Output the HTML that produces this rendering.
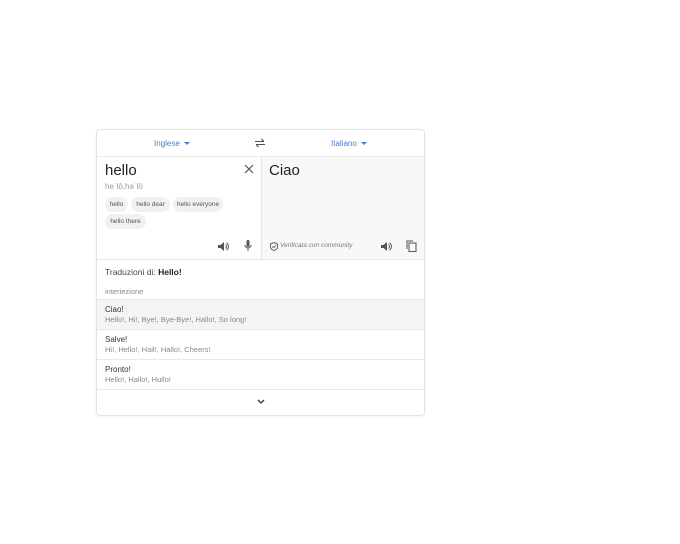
<!DOCTYPE html>
<html><head><meta charset="utf-8"><style>
body{margin:0;width:680px;height:544px;background:#fff;font-family:"Liberation Sans",Arial,sans-serif;position:relative;overflow:hidden}
.card{position:absolute;left:96px;top:129px;width:327px;height:285px;border:1px solid #e3e3e3;border-radius:4px;box-shadow:0 1px 2px rgba(0,0,0,.06);overflow:hidden}
.a{position:absolute}
.lang{color:#4a7fd0;font-size:8px}
.tri{display:inline-block;width:0;height:0;border-left:3px solid transparent;border-right:3px solid transparent;border-top:3px solid #4a7fd0;margin-left:4px;vertical-align:1px}
.chip{position:absolute;background:#f1f1f1;border-radius:9px;font-size:6.5px;color:#555;height:15px;line-height:15px;text-align:center}
.row{position:absolute;left:0;width:327px;border-top:1px solid #e8e8e8}
.t1{position:absolute;left:8px;font-size:8px;color:#333}
.t2{position:absolute;left:8px;font-size:7.5px;color:#888}
</style></head><body>
<div class="card">
 <div class="a lang" style="left:57px;top:9px">Inglese<span class="tri"></span></div>
 <div class="a lang" style="left:234px;top:9px">Italiano<span class="tri"></span></div>
 <svg class="a" style="left:157px;top:8px" width="12" height="10" viewBox="0 0 12 10"><path d="M1 3.5h9M7.5 1l2.5 2.5M11 6.5H2M4.5 9L2 6.5" stroke="#555" stroke-width="1.1" fill="none"/></svg>
 <div class="a" style="left:0;top:26px;width:327px;border-top:1px solid #ececec"></div>
 <div class="a" style="left:164px;top:27px;width:163px;height:102px;background:#f7f8fa;border-left:1px solid #e6e6e6"></div>
 <div class="a" style="left:8px;top:32px;font-size:15px;color:#222">hello</div>
 <svg class="a" style="left:147px;top:34px" width="10" height="10" viewBox="0 0 10 10"><path d="M1 1l8 8M9 1L1 9" stroke="#555" stroke-width="1.2"/></svg>
 <div class="a" style="left:8px;top:52px;font-size:8px;color:#999">he˙lō,hə˙lō</div>
 <div class="chip" style="left:8px;top:67px;width:23px">hello</div>
 <div class="chip" style="left:34px;top:67px;width:39px">hello dear</div>
 <div class="chip" style="left:76px;top:67px;width:50px">hello everyone</div>
 <div class="chip" style="left:8px;top:84px;width:41px">hello there</div>
 <svg class="a" style="left:120px;top:111px" width="12" height="11" viewBox="0 0 12 11"><path d="M1 4h2.5L7 1v9L3.5 7H1z" fill="#555"/><path d="M8.5 3.5a2.5 2.5 0 010 4M9.5 1.8a4.5 4.5 0 010 7.4" stroke="#555" fill="none"/></svg>
 <svg class="a" style="left:147px;top:110px" width="8" height="12" viewBox="0 0 8 12"><rect x="2.5" y="0" width="3" height="7" rx="1.5" fill="#555"/><path d="M1 5a3 3 0 006 0M4 8v3" stroke="#555" fill="none"/></svg>
 <div class="a" style="left:172px;top:32px;font-size:15px;color:#222">Ciao</div>
 <svg class="a" style="left:173px;top:112px" width="8" height="9" viewBox="0 0 8 9"><path d="M4 .5L7.5 2v3C7.5 7 5.5 8 4 8.5 2.5 8 .5 7 .5 5V2z" stroke="#666" fill="none"/><path d="M2.3 4.5l1.3 1.3 2.2-2.5" stroke="#666" fill="none"/></svg>
 <div class="a" style="left:183px;top:112px;font-size:6.5px;color:#777;font-style:italic">Verificata con community</div>
 <svg class="a" style="left:283px;top:111px" width="12" height="11" viewBox="0 0 12 11"><path d="M1 4h2.5L7 1v9L3.5 7H1z" fill="#555"/><path d="M8.5 3.5a2.5 2.5 0 010 4M9.5 1.8a4.5 4.5 0 010 7.4" stroke="#555" fill="none"/></svg>
 <svg class="a" style="left:309px;top:110px" width="11" height="12" viewBox="0 0 11 12"><path d="M1 9V1h6" stroke="#555" fill="none"/><rect x="3" y="3" width="7" height="8.5" stroke="#555" fill="none"/></svg>
 <div class="a" style="left:0;top:129px;width:327px;border-top:1px solid #e6e6e6"></div>
 <div class="a" style="left:8px;top:137px;font-size:8.5px;color:#444">Traduzioni di: <b style="color:#222">Hello!</b></div>
 <div class="a" style="left:8px;top:157px;font-size:7.5px;color:#888">interiezione</div>
 <div class="row" style="top:169px;height:30px;background:#f4f4f4"><div class="t1" style="top:5px">Ciao!</div><div class="t2" style="top:15px">Hello!, Hi!, Bye!, Bye-Bye!, Hallo!, So long!</div></div>
 <div class="row" style="top:199px;height:30px"><div class="t1" style="top:5px">Salve!</div><div class="t2" style="top:15px">Hi!, Hello!, Hail!, Hallo!, Cheers!</div></div>
 <div class="row" style="top:229px;height:30px"><div class="t1" style="top:5px">Pronto!</div><div class="t2" style="top:15px">Hello!, Hallo!, Hullo!</div></div>
 <div class="row" style="top:259px;height:26px"></div>
 <svg class="a" style="left:160px;top:269px" width="8" height="5" viewBox="0 0 8 5"><path d="M1 1l3 3 3-3" stroke="#333" stroke-width="1.3" fill="none"/></svg>
</div>
</body></html>
